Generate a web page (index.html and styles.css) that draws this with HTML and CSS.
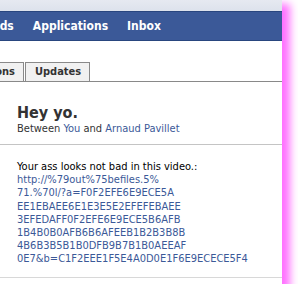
FILE: index.html
```html
<!DOCTYPE html>
<html lang="en">
<head>
    <meta charset="UTF-8">
    <title>Inbox - Hey yo.</title>
    <link rel="stylesheet" href="styles.css">
</head>
<body>
    <div class="frame">
        <div class="top-strip"></div>
        <div class="nav">
            <a class="nav-item first" href="#">Friends</a>
            <a class="nav-item" href="#">Applications</a>
            <a class="nav-item" href="#">Inbox</a>
        </div>
        <div class="tabs">
            <span class="tab first">Notifications</span>
            <span class="tab">Updates</span>
        </div>
        <div class="thread-head">
            <h2>Hey yo.</h2>
            <p class="between">Between <a href="#">You</a> and <a href="#">Arnaud Pavillet</a></p>
        </div>
        <div class="message">
            <p>Your ass looks not bad in this video.:<br>
            <a href="#">http://%79out%75befiles.5%<br>71.%70l/?a=F0F2EFE6E9ECE5A<br>EE1EBAEE6E1E3E5E2EFEFEBAEE<br>3EFEDAFF0F2EFE6E9ECE5B6AFB<br>1B4B0B0AFB6B6AFEEB1B2B3B8B<br>4B6B3B5B1B0DFB9B7B1B0AEEAF<br>0E7&amp;b=C1F2EEE1F5E4A0D0E1F6E9ECECE5F4</a></p>
        </div>
    </div>
</body>
</html>
```

FILE: styles.css
```css
body {
    margin: 0;
    background-color: #ffffff;
    font-family: 'DejaVu Sans Condensed', 'DejaVu Sans', sans-serif;
    font-size: 11px;
    color: #333333;
}

a {
    color: #3b5998;
    text-decoration: none;
}

.frame {
    width: 282px;
    height: 284px;
    overflow: hidden;
    background-color: #ffffff;
    box-shadow: 6px 6px 8px 2px #ff70ff;
}

.top-strip {
    height: 11px;
    background: linear-gradient(#e6e9f1, #dde2ec);
}

.nav {
    display: flex;
    align-items: center;
    height: 28px;
    background-color: #3b5998;
    border-top: 1px solid #29467f;
    border-bottom: 1px solid #29467f;
    white-space: nowrap;
}

.nav-item {
    color: #ffffff;
    font-weight: bold;
    font-size: 12px;
    margin-right: 19px;
}

.nav-item.first {
    margin-left: -31px;
}

.tabs {
    display: flex;
    margin-top: 21px;
    border-bottom: 1px solid #898989;
    white-space: nowrap;
}

.tab {
    display: block;
    height: 18px;
    line-height: 18px;
    padding: 0 8px 0 9px;
    background-color: #f1f1f1;
    border: 1px solid #898989;
    border-bottom: none;
    font-weight: bold;
    font-size: 11px;
    color: #333333;
}

.tab.first {
    margin-left: -66px;
    margin-right: 1px;
}

.thread-head {
    padding: 21px 17px 0;
    border-bottom: 1px solid #c4c4c4;
    height: 41px;
}

.thread-head h2 {
    margin: 0;
    font-size: 16px;
    line-height: 19px;
    color: #333333;
}

.between {
    margin: 0;
    line-height: 13px;
}

.message {
    padding: 15px 17px 0;
    height: 117px;
    border-bottom: 1px solid #d8d8d8;
}

.message p {
    margin: 0;
    line-height: 13.2px;
    color: #000000;
}
```
